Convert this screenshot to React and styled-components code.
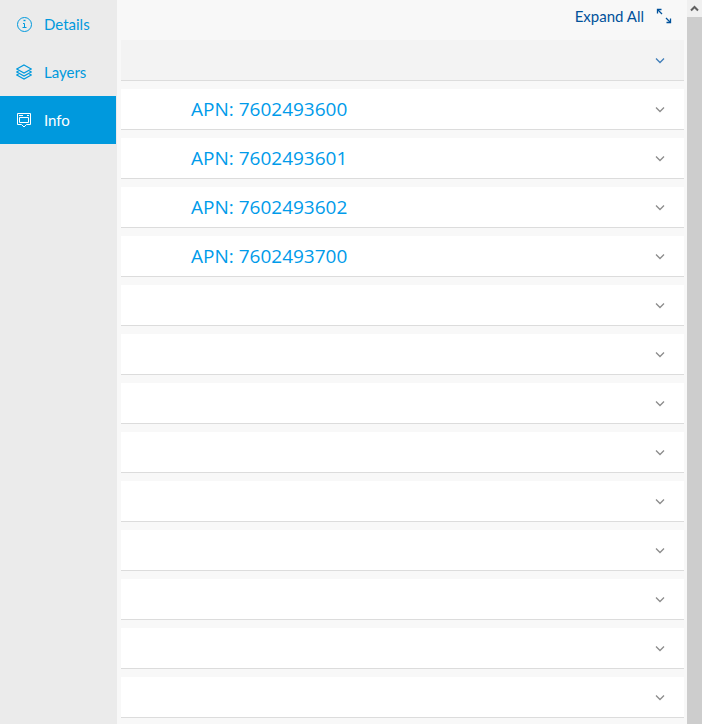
import React, { useState } from 'react';
import styled, { createGlobalStyle, ThemeProvider } from 'styled-components';

const theme = {
  font: "'Lato', 'Liberation Sans', sans-serif",
  headingFont: "'Open Sans', 'Noto Sans', sans-serif",
  colors: {
    blue: '#0099dd',
    darkBlue: '#00529b',
    link: '#009bea',
    sidebar: '#ebebeb',
    page: '#f8f8f8',
    row: '#ffffff',
    rowActive: '#f3f3f3',
    border: '#dcdcdc',
    chevron: '#8c8c8c',
    chevronActive: '#3f7db8',
  },
};

const GlobalStyle = createGlobalStyle`
  *, *::before, *::after {
    box-sizing: border-box;
  }

  body {
    margin: 0;
    background-color: #f8f8f8;
  }

  button {
    margin: 0;
    padding: 0;
    border: 0;
    background: none;
    cursor: pointer;
  }
`;

const Page = styled.div`
  display: flex;
  min-height: 100vh;
  background-color: ${({ theme }) => theme.colors.page};
  font-family: ${({ theme }) => theme.font};
`;

const Sidebar = styled.nav`
  flex: none;
  display: flex;
  flex-direction: column;
  width: 117px;
  padding-right: 1px;
  background-color: ${({ theme }) => theme.colors.sidebar};
`;

const NavButton = styled.button`
  display: flex;
  align-items: center;
  gap: 12px;
  height: 48px;
  padding: 0 16px;

  font-family: ${({ theme }) => theme.font};
  font-size: 15px;
  font-weight: 400;
  line-height: 20px;
  color: ${({ theme, $active }) => ($active ? '#ffffff' : theme.colors.blue)};
  background-color: ${({ theme, $active }) => ($active ? theme.colors.blue : 'transparent')};
`;

const Icon = styled.svg`
  flex: none;
  display: block;
  fill: none;
  stroke: currentColor;
  stroke-width: 1;
`;

const Main = styled.main`
  flex: 1;
  min-width: 0;
  padding: 0 3px 6px 4px;
`;

const Toolbar = styled.div`
  display: flex;
  justify-content: flex-end;
  height: 40px;
  padding-right: 12px;
`;

const ExpandButton = styled.button`
  display: flex;
  align-items: center;
  gap: 12px;
  height: 32px;

  font-family: ${({ theme }) => theme.font};
  font-size: 15px;
  font-weight: 400;
  line-height: 20px;
  color: ${({ theme }) => theme.colors.darkBlue};
`;

const RowList = styled.div`
  display: flex;
  flex-direction: column;
  gap: 8px;
`;

const Row = styled.button`
  display: flex;
  align-items: center;
  justify-content: space-between;
  width: 100%;
  height: 41px;
  padding: 0 19px 0 70px;

  text-align: left;
  color: ${({ theme, $active }) => ($active ? theme.colors.chevronActive : theme.colors.chevron)};
  background-color: ${({ theme, $active }) => ($active ? theme.colors.rowActive : theme.colors.row)};

  && {
    border-bottom: 1px solid ${({ theme }) => theme.colors.border};
  }
`;

const RowTitle = styled.span`
  font-family: ${({ theme }) => theme.headingFont};
  font-size: 19px;
  font-weight: 400;
  line-height: 24px;
  color: ${({ theme }) => theme.colors.link};
`;

const ScrollTrack = styled.div`
  flex: none;
  display: flex;
  flex-direction: column;
  width: 15px;
  background-color: #f0f0f0;
`;

const ScrollUp = styled.button`
  display: flex;
  align-items: center;
  justify-content: center;
  height: 17px;
  color: #606060;
`;

const ScrollThumb = styled.div`
  flex: 1;
  background-color: #cdcdcd;
`;

const InfoIcon = () => (
  <Icon width="16" height="16" viewBox="0 0 16 16" aria-hidden="true">
    <circle cx="8.5" cy="8.5" r="7" />
    <path d="M7 7.5h1.5v4M6.5 11.5h4" />
    <path d="M7.5 4.5h2" strokeWidth="1.4" />
  </Icon>
);

const LayersIcon = () => (
  <Icon width="16" height="16" viewBox="0 0 16 16" aria-hidden="true">
    <path d="M8 1l7.2 4L8 9 .8 5z" strokeWidth="1.2" />
    <path d="M2.6 7L.8 8 8 12l7.2-4-1.8-1" strokeWidth="1.2" />
    <path d="M2.6 10L.8 11 8 15l7.2-4-1.8-1" strokeWidth="1.2" />
  </Icon>
);

const PopupIcon = () => (
  <Icon width="16" height="16" viewBox="0 0 16 16" aria-hidden="true">
    <path d="M1.5 1.5h13v11h-4L8 15l-2.5-2.5h-4z" />
    <path d="M3.5 5.5h9v5h-9z" />
    <path d="M3 3.5h4M11 3.5h2" />
  </Icon>
);

const ExpandIcon = () => (
  <Icon width="16" height="16" viewBox="0 0 16 16" aria-hidden="true">
    <path d="M1.500 5.500V1.500H5.500M14.500 10.500V14.500H10.500" strokeWidth="1.300" />
    <path d="M1.500 1.500l4.500 4.500M14.500 14.500l-4.500-4.500" strokeWidth="1.300" />
  </Icon>
);

const ChevronIcon = () => (
  <Icon width="10" height="10" viewBox="0 0 10 10" aria-hidden="true">
    <path d="M1 3.5l4 4 4-4" strokeWidth="1.3" />
  </Icon>
);

const navItems = [
  { label: 'Details', icon: InfoIcon },
  { label: 'Layers', icon: LayersIcon },
  { label: 'Info', icon: PopupIcon },
];

const rows = [
  '',
  'APN: 7602493600',
  'APN: 7602493601',
  'APN: 7602493602',
  'APN: 7602493700',
  ...Array(9).fill(''),
];

export default function App() {
  const [tab, setTab] = useState('Info');
  const [activeRow, setActiveRow] = useState(0);

  return (
    <ThemeProvider theme={theme}>
      <GlobalStyle />
      <Page>
        <Sidebar>
          {navItems.map(({ label, icon: NavIcon }) => (
            <NavButton
              key={label}
              type="button"
              $active={tab === label}
              onClick={() => setTab(label)}
            >
              <NavIcon />
              {label}
            </NavButton>
          ))}
        </Sidebar>
        <Main>
          <Toolbar>
            <ExpandButton type="button">
              Expand All
              <ExpandIcon />
            </ExpandButton>
          </Toolbar>
          <RowList>
            {rows.map((title, index) => (
              <Row
                key={index}
                type="button"
                aria-label={title || `Section ${index + 1}`}
                $active={activeRow === index}
                onClick={() => setActiveRow(index)}
              >
                <RowTitle>{title}</RowTitle>
                <ChevronIcon />
              </Row>
            ))}
          </RowList>
        </Main>
        <ScrollTrack>
          <ScrollUp type="button" aria-label="Scroll up">
            <Icon width="9" height="7" viewBox="0 0 9 7" aria-hidden="true">
              <path d="M1 5.5l3.5-3.5L8 5.5" strokeWidth="2" />
            </Icon>
          </ScrollUp>
          <ScrollThumb />
        </ScrollTrack>
      </Page>
    </ThemeProvider>
  );
}
